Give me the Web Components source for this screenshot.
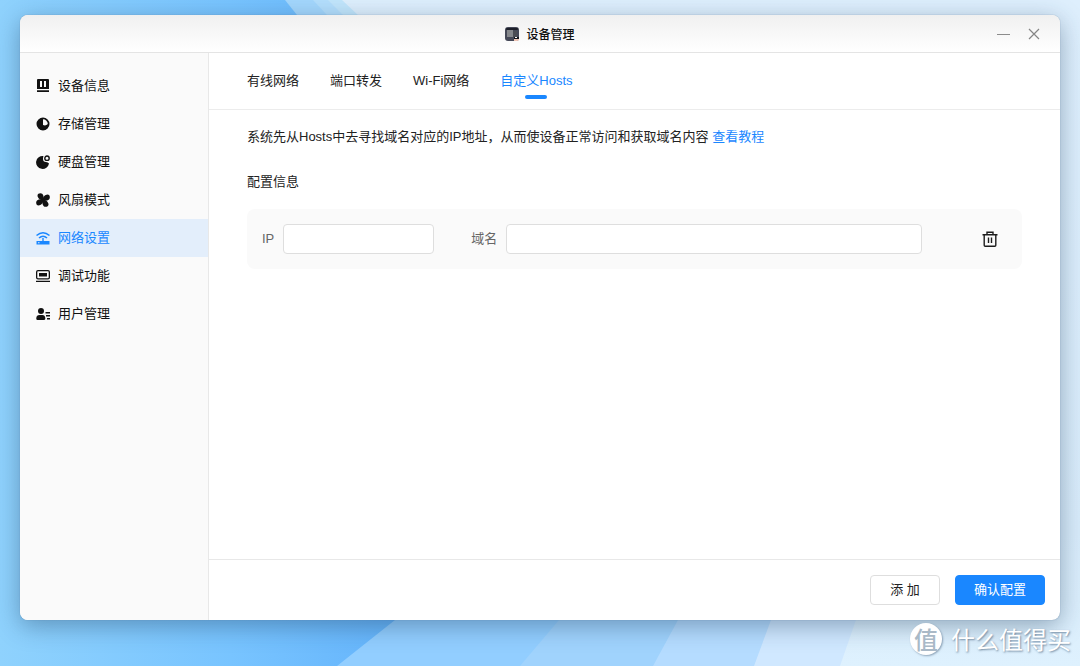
<!DOCTYPE html>
<html lang="zh-CN">
<head>
<meta charset="utf-8">
<meta name="viewport" content="width=device-width, initial-scale=1">
<title>设备管理</title>
<style>
  body { margin: 0; font: 13px/20px "Liberation Sans", "Noto Sans CJK SC", sans-serif; color: #222; }
</style>
</head>
<body>
<desk-top>
  <app-window>
    <title-bar slot="title">设备管理</title-bar>
    <side-nav slot="nav">
      <nav-item icon="info">设备信息</nav-item>
      <nav-item icon="storage">存储管理</nav-item>
      <nav-item icon="disk">硬盘管理</nav-item>
      <nav-item icon="fan">风扇模式</nav-item>
      <nav-item icon="network" current>网络设置</nav-item>
      <nav-item icon="debug">调试功能</nav-item>
      <nav-item icon="users">用户管理</nav-item>
    </side-nav>
    <tab-bar slot="tabs">
      <tab-link>有线网络</tab-link>
      <tab-link>端口转发</tab-link>
      <tab-link>Wi-Fi网络</tab-link>
      <tab-link current>自定义Hosts</tab-link>
    </tab-bar>
    <hosts-panel>
      <host-entry></host-entry>
    </hosts-panel>
    <push-button slot="actions">添 加</push-button>
    <push-button slot="actions" primary>确认配置</push-button>
  </app-window>
  <site-mark slot="mark">什么值得买</site-mark>
</desk-top>

<script>
const define = (name, html, setup) => {
  const template = document.createElement('template');
  template.innerHTML = html;
  customElements.define(name, class extends HTMLElement {
    constructor() {
      super();
      this.attachShadow({ mode: 'open' }).append(template.content.cloneNode(true));
    }
    connectedCallback() { if (setup) setup(this, this.shadowRoot); }
  });
};

define('desk-top', `
<style>
  :host { display: flex; flex-direction: column; box-sizing: border-box; min-height: 100vh; padding: 15px 20px 0; position: relative; isolation: isolate; overflow: hidden; }
  .wallpaper { position: absolute; inset: 0; width: 100%; height: 100%; z-index: -1; }
  .main { flex: 1; display: flex; }
  .main > slot::slotted(*) { flex: 1; min-width: 0; }
  footer { box-sizing: border-box; height: 46px; padding-bottom: 8px; display: flex; justify-content: flex-end; align-items: center; margin-right: -11px; }
</style>
<svg class="wallpaper" viewBox="0 0 1080 666" preserveAspectRatio="none" aria-hidden="true">
  <defs>
    <linearGradient id="sky" gradientUnits="userSpaceOnUse" x1="0" y1="0" x2="420" y2="0"><stop offset="0" stop-color="#8fd2fd"/><stop offset=".55" stop-color="#78c4ff"/><stop offset="1" stop-color="#62b2fb"/></linearGradient>
    <linearGradient id="pale" x1="0" y1="0" x2="0" y2="1"><stop offset="0" stop-color="#deeffd"/><stop offset=".8" stop-color="#d8ebfa"/><stop offset="1" stop-color="#def1fe"/></linearGradient>
  </defs>
  <path fill="url(#sky)" d="M0 0H1080V666H0z"/>
  <path fill="#a4d7fd" d="M285 0 297 15 560 320H1080V0z"/>
  <path fill="#b4dffd" d="M313 0 327 15 600 320H1080V0z"/>
  <path fill="#c2e6fc" d="M328 0 343 15 620 320H1080V0z"/>
  <path fill="url(#pale)" d="M342 0 358 15 650 320V400H1080V0z"/>
  <path fill="#92ceff" d="M337 666 395 620 650 400H1080V666z"/>
  <path fill="#a0d3fd" d="M520 666 559 620 700 400H1080V666z"/>
  <path fill="#b5dcff" d="M653 666 678 620 760 400H1080V666z"/>
  <path fill="#d0e8ff" d="M754 666 771 620 830 400H1080V666z"/>
  <path fill="url(#pale)" d="M840 666 856 620 900 400V0H1080V666z"/>
</svg>
<div class="main"><slot></slot></div>
<footer><slot name="mark"></slot></footer>`);

define('app-window', `
<style>
  :host { display: flex; flex-direction: column; background: #fff; border-radius: 8px; overflow: hidden; box-shadow: 0 0 1px #5a7f9f, 0 6px 24px rgba(30, 60, 90, .4); }
  .body { flex: 1; display: flex; }
  main { flex: 1; min-width: 0; display: flex; flex-direction: column; }
  .content { flex: 1; padding: 17px 38px; }
  footer { display: flex; justify-content: flex-end; gap: 15px; padding: 15px; border-top: 1px solid #e8e8e8; }
</style>
<slot name="title"></slot>
<div class="body">
  <slot name="nav"></slot>
  <main>
    <slot name="tabs"></slot>
    <div class="content"><slot></slot></div>
    <footer><slot name="actions"></slot></footer>
  </main>
</div>`);

define('title-bar', `
<style>
  :host { display: grid; grid-template-columns: 1fr auto 1fr; align-items: center; height: 37px; border-bottom: 1px solid #e4e4e4; background: linear-gradient(#f0f0f0, #fff); }
  h1 { grid-column: 2; display: flex; align-items: center; gap: 7px; margin: 0; font-size: 12px; font-weight: 500; line-height: 20px; font-family: "Noto Sans CJK SC", sans-serif; color: #111; }
  .controls { display: flex; justify-content: flex-end; gap: 14px; padding-right: 18px; }
  button { display: block; padding: 0; border: 0; background: none; width: 16px; height: 16px; }
  svg { display: block; }
</style>
<h1>
  <svg width="14" height="14" viewBox="0 0 14 14" aria-hidden="true"><rect width="14" height="14" rx="3" fill="#454857"/><rect x="1" y="1" width="12" height="2" rx="1" fill="#1d1f2a"/><path d="M2 3h6v7H2z" fill="#85878b"/><path d="M8 4h4v6H8z" fill="#4b4d54"/><path d="M9 10h5v2h-5z" fill="#15161c"/><path d="M10 10h2v1h-2z" fill="#fff"/><path d="M9 12h5v1q-1 1-2 1H9z" fill="#efc4b4"/></svg>
  <slot></slot>
</h1>
<div class="controls">
  <button aria-label="最小化"><svg width="16" height="16" fill="none" stroke="#8c8c8c"><path d="M1 8.500H14"/></svg></button>
  <button aria-label="关闭"><svg width="16" height="16" fill="none" stroke="#858585" stroke-width="1.200"><path d="M3 3 13 13M13 3 3 13"/></svg></button>
</div>`);

define('side-nav', `
<style>
  :host { display: block; width: 188px; flex: none; background: #fafafa; border-right: 1px solid #e8e8e8; }
  nav { padding-top: 14px; }
</style>
<nav><slot></slot></nav>`);

const blade = 'M7 7.500C4.500 7.500 1.500 5 1.500 2.500C1.500 0 5 -.500 6.500 1C8 3 8 5 7 7.500z';
const icons = {
  info: '<path fill-rule="evenodd" d="M2 0H12Q13 0 13 1V10H1V1Q1 0 2 0zM4 2V8H6V2zM8 2V8H10V2z"/><path d="M1 11.300H13V13H1z"/>',
  storage: '<path fill-rule="evenodd" d="M7 .5a6.500 6.500 0 1 0 0 13a6.500 6.500 0 1 0 0-13zM7 2.300A4.800 4.800 0 0 1 11.800 7A4 4 0 0 1 7 8z"/>',
  disk: '<path d="M7.500 1A6.500 6.500 0 1 0 13 8.500Q12 7 10 7Q7 7 7 4Q7 2 7.500 1z"/><circle cx="11" cy="3.200" r="2.200" fill="none" stroke="currentColor" stroke-width="1.400"/>',
  fan: [0, 90, 180, 270].map(turn => `<path d="${blade}" transform="rotate(${turn} 7 7)"/>`).join(''),
  network: '<path d="M.5 4.500Q7-1 13.500 4.500M3 7Q7 3.500 11 7" fill="none" stroke="currentColor" stroke-width="1.600"/><path fill-rule="evenodd" d="M6.300 7H7.700V10H13.500V13.500H.5V10H6.300zM2 11.200V12.200H3.500V11.200z"/>',
  debug: '<path fill-rule="evenodd" d="M2 1H12Q14 1 14 3V8.500Q14 10.500 12 10.500H2Q0 10.500 0 8.500V3Q0 1 2 1zM2 2.300Q1.300 2.300 1.300 3V8.500Q1.300 9.200 2 9.200H12Q12.700 9.200 12.700 8.500V3Q12.700 2.300 12 2.300z"/><path d="M3 4H11V7.500H3zM0 11.800H14V13H0z"/>',
  users: '<circle cx="5" cy="4" r="3"/><path d="M.3 12V11Q.5 8 3.500 8H6.500Q9 8 9.300 11V12Q9 13 8 13H1.500Q.5 13 .3 12zM9.500 5H14V6.500H9.500zM10 8H14V9.500H10zM11 11H14V12.500H11z"/>'
};

define('nav-item', `
<style>
  :host { display: block; color: #111; }
  :host([current]) { color: #1a87ff; background: #e3eefb; }
  a { display: flex; align-items: center; gap: 8px; height: 38px; padding-left: 16px; color: inherit; text-decoration: none; }
  svg { flex: none; }
</style>
<a href="#"><svg width="14" height="14" viewBox="0 0 14 14" fill="currentColor" aria-hidden="true"></svg><slot></slot></a>`,
(host, root) => {
  root.querySelector('svg').innerHTML = icons[host.getAttribute('icon')];
  if (host.hasAttribute('current')) root.querySelector('a').setAttribute('aria-current', 'page');
});

define('tab-bar', `
<style>
  :host { display: block; border-bottom: 1px solid #ececec; }
  nav { display: flex; gap: 31px; padding: 0 38px; height: 56px; }
</style>
<nav><slot></slot></nav>`);

define('tab-link', `
<style>
  :host { display: block; }
  a { display: flex; flex-direction: column; align-items: center; gap: 4px; padding-top: 18px; color: #222; text-decoration: none; white-space: nowrap; }
  :host([current]) a { color: #1a87ff; }
  :host([current]) a::after { content: ""; width: 22px; height: 4px; border-radius: 2px; background: #1a87ff; }
</style>
<a href="#"><slot></slot></a>`,
(host, root) => {
  if (host.hasAttribute('current')) root.querySelector('a').setAttribute('aria-current', 'page');
});

define('hosts-panel', `
<style>
  :host { display: block; }
  p, h2 { margin: 0; font-size: 13px; line-height: 20px; font-weight: 400; }
  h2 { margin: 25px 0 17px; }
  a { color: #1a87ff; text-decoration: none; }
</style>
<p>系统先从Hosts中去寻找域名对应的IP地址，从而使设备正常访问和获取域名内容 <a href="#">查看教程</a></p>
<h2>配置信息</h2>
<slot></slot>`);

define('host-entry', `
<style>
  :host { display: flex; align-items: center; padding: 15px; border-radius: 8px; background: #fafafa; color: #666; }
  label { flex: none; }
  input { box-sizing: border-box; height: 30px; margin: 0 0 0 9px; padding: 0 8px; border: 1px solid #dedede; border-radius: 4px; background: #fff; font: inherit; color: #222; min-width: 0; }
  #ip { width: 151px; margin-right: 37px; }
  #domain { flex: 1; }
  button { flex: none; display: block; padding: 0; border: 0; background: none; width: 16px; height: 16px; margin: 0 9px 0 60px; }
  svg { display: block; }
</style>
<label for="ip">IP</label><input id="ip" type="text">
<label for="domain">域名</label><input id="domain" type="text">
<button aria-label="删除"><svg width="16" height="16" viewBox="0 0 16 16" fill="none" stroke="#1c1c1c" stroke-width="1.400"><path d="M.5 3.800H15.500M5 3.500V1.200H11V3.500M2.200 4V14.200Q2.200 15.200 3.200 15.200H12.800Q13.800 15.200 13.800 14.200V4M6.500 6.500V12M9.500 6.500V12"/></svg></button>`);

define('push-button', `
<style>
  :host { display: block; }
  button { box-sizing: border-box; height: 30px; min-width: 70px; padding: 0 18px; border: 1px solid #dedede; border-radius: 4px; background: #fff; color: #222; font: inherit; white-space: pre; }
  :host([primary]) button { border-color: #1a87ff; background: #1a87ff; color: #fff; }
</style>
<button type="button"><slot></slot></button>`);

define('site-mark', `
<style>
  :host { display: flex; align-items: center; gap: 9px; color: #fff; font: 24px/32px "Noto Sans CJK SC", sans-serif; }
  .text { text-shadow: 1px 1px 2px rgba(90, 115, 140, .8); }
  .seal { display: grid; place-items: center; width: 32px; height: 32px; border-radius: 50%; background: #fff; color: #a9b9c7; font-weight: 500; box-shadow: 1px 1px 2px rgba(90, 115, 140, .6); }
</style>
<span class="seal">值</span><span class="text"><slot></slot></span>`);
</script>
</body>
</html>
